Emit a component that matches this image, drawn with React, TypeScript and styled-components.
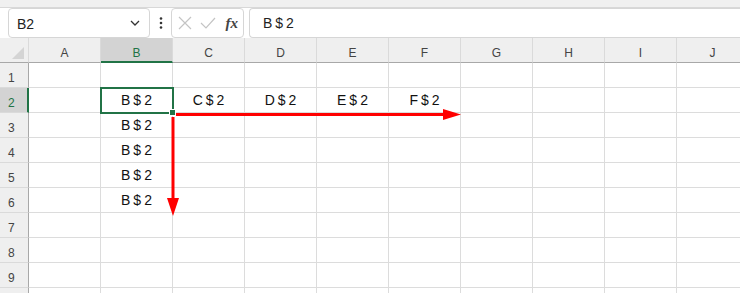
import styled, { createGlobalStyle } from "styled-components";

const GlobalStyle = createGlobalStyle`
  html, body {
    margin: 0;
    padding: 0;
    background: #ffffff;
    overflow: hidden;
  }
  body {
    font-family: "Noto Sans CJK JP", "Liberation Sans", sans-serif;
  }
`;

const Page = styled.div`
  width: 740px;
  height: 293px;
  position: relative;
  overflow: hidden;
  background: #ffffff;
`;

const TopStrip = styled.div`
  height: 7px;
  background: #f0f0f0;
  border-bottom: 1px solid #d8d8d8;
`;

const FormulaBar = styled.div`
  height: 30px;
  display: flex;
  align-items: stretch;
  padding: 0 0 0 8px;
  background: #ffffff;
`;

const Box = styled.div<{ $width?: number; $open?: boolean }>`
  box-sizing: border-box;
  height: 30px;
  ${(p) => (p.$width ? `width: ${p.$width}px;` : "flex: 1;")}
  border: 1px solid #d6d6d6;
  border-radius: ${(p) => (p.$open ? "4px 0 0 4px" : "4px")};
  ${(p) => p.$open && "border-right: none;"}
  display: flex;
  align-items: center;
  background: #ffffff;
`;

const Spacer = styled.div`
  width: 5px;
`;

const NameText = styled.span`
  flex: 1;
  padding-left: 8px;
  padding-top: 2px;
  font-family: "Liberation Sans", Arial, sans-serif;
  font-size: 14px;
  color: #222;
`;

const Dots = styled.div`
  width: 21px;
  display: flex;
  align-items: center;
  justify-content: center;
`;

const FormulaText = styled.span`
  padding-left: 13px;
  font-family: "Liberation Sans", Arial, sans-serif;
  font-size: 14px;
  letter-spacing: 3px;
  color: #222;
`;

const Fx = styled.span`
  font-family: "Liberation Serif", "Times New Roman", serif;
  font-style: italic;
  font-weight: bold;
  font-size: 15px;
  color: #444;
  margin-left: auto;
  margin-right: 5px;
`;

const Grid = styled.div`
  display: grid;
  grid-template-columns: 29px repeat(10, 72px);
  grid-auto-rows: 25px;
`;

const Corner = styled.div`
  box-sizing: border-box;
  background: #efefef;
  border-right: 1px solid #dadada;
  border-bottom: 1px solid #a8a8a8;
  position: relative;
`;

const ColHead = styled.div<{ $active?: boolean }>`
  box-sizing: border-box;
  background: ${(p) => (p.$active ? "#d3d3d3" : "#efefef")};
  border-right: 1px solid #dadada;
  border-bottom: ${(p) => (p.$active ? "2px solid #217346" : "1px solid #a8a8a8")};
  color: ${(p) => (p.$active ? "#217346" : "#444")};
  font-family: "Liberation Sans", Arial, sans-serif;
  font-size: 12px;
  display: flex;
  align-items: flex-end;
  justify-content: center;
  padding-bottom: ${(p) => (p.$active ? "1px" : "2px")};
`;

const RowHead = styled.div<{ $active?: boolean }>`
  box-sizing: border-box;
  background: ${(p) => (p.$active ? "#d3d3d3" : "#efefef")};
  border-right: ${(p) => (p.$active ? "2px solid #217346" : "1px solid #a8a8a8")};
  border-bottom: 1px solid #dadada;
  color: ${(p) => (p.$active ? "#217346" : "#444")};
  font-family: "Liberation Sans", Arial, sans-serif;
  font-size: 12px;
  display: flex;
  align-items: flex-end;
  padding: 0 0 2px 8px;
`;

const Cell = styled.div<{ $selected?: boolean }>`
  box-sizing: border-box;
  border-right: 1px solid #dcdcdc;
  border-bottom: 1px solid #dcdcdc;
  display: flex;
  align-items: center;
  justify-content: center;
  padding-left: 3px;
  font-family: "Liberation Sans", Arial, sans-serif;
  font-size: 14px;
  letter-spacing: 3px;
  color: #111;
  position: relative;
  ${(p) =>
    p.$selected &&
    `
    outline: 2px solid #217346;
    outline-offset: -1px;
    z-index: 2;
  `}
`;

const Handle = styled.span`
  position: absolute;
  right: -4px;
  bottom: -4px;
  width: 5px;
  height: 5px;
  background: #217346;
  border: 1px solid #ffffff;
`;

const Arrows = styled.svg`
  position: absolute;
  left: 0;
  top: 0;
  z-index: 3;
  pointer-events: none;
`;

const columns = ["A", "B", "C", "D", "E", "F", "G", "H", "I", "J"];

const values: Record<string, string> = {
  B2: "B$2",
  C2: "C$2",
  D2: "D$2",
  E2: "E$2",
  F2: "F$2",
  B3: "B$2",
  B4: "B$2",
  B5: "B$2",
  B6: "B$2",
};

const App = () => {
  const rows = Array.from({ length: 10 }, (_, i) => i + 1);
  return (
    <Page>
      <GlobalStyle />
      <TopStrip />
      <FormulaBar>
        <Box $width={142}>
          <NameText>B2</NameText>
          <svg width="12" height="8" viewBox="0 0 12 8" style={{ marginRight: 8 }}>
            <path d="M2 2 L6 6 L10 2" fill="none" stroke="#333" strokeWidth="1.3" />
          </svg>
        </Box>
        <Dots>
          <svg width="4" height="14" viewBox="0 0 4 14">
            <circle cx="2" cy="2.5" r="1.3" fill="#333" />
            <circle cx="2" cy="7" r="1.3" fill="#333" />
            <circle cx="2" cy="11.5" r="1.3" fill="#333" />
          </svg>
        </Dots>
        <Box $width={73}>
          <svg width="14" height="14" viewBox="0 0 14 14" style={{ marginLeft: 6 }}>
            <path d="M1 1 L13 13 M13 1 L1 13" stroke="#c4c4c4" strokeWidth="1.2" />
          </svg>
          <svg width="16" height="14" viewBox="0 0 16 14" style={{ marginLeft: 8 }}>
            <path d="M1 7 L6 12 L15 2" fill="none" stroke="#c4c4c4" strokeWidth="1.2" />
          </svg>
          <Fx>fx</Fx>
        </Box>
        <Spacer />
        <Box $open>
          <FormulaText>B$2</FormulaText>
        </Box>
      </FormulaBar>
      <Grid>
        <Corner>
          <svg width="12" height="12" viewBox="0 0 12 12" style={{ position: "absolute", right: 4, bottom: 3 }}>
            <path d="M12 0 L12 12 L0 12 Z" fill="#d4d4d4" />
          </svg>
        </Corner>
        {columns.map((c) => (
          <ColHead key={c} $active={c === "B"}>
            {c}
          </ColHead>
        ))}
        {rows.map((r) => [
          <RowHead key={`h${r}`} $active={r === 2}>
            {r < 10 ? r : ""}
          </RowHead>,
          ...columns.map((c) => (
            <Cell key={`${c}${r}`} $selected={c === "B" && r === 2}>
              {values[`${c}${r}`] ?? ""}
              {c === "B" && r === 2 && <Handle />}
            </Cell>
          )),
        ])}
      </Grid>
      <Arrows width="740" height="293" viewBox="0 0 740 293">
        <line x1="176" y1="114.5" x2="446" y2="114.5" stroke="#ff0000" strokeWidth="3" />
        <path d="M443 109 L461 114.5 L443 120 Z" fill="#ff0000" />
        <line x1="173" y1="117" x2="173" y2="201" stroke="#ff0000" strokeWidth="3" />
        <path d="M167 198 L173 216 L179 198 Z" fill="#ff0000" />
      </Arrows>
    </Page>
  );
};

export default App;
